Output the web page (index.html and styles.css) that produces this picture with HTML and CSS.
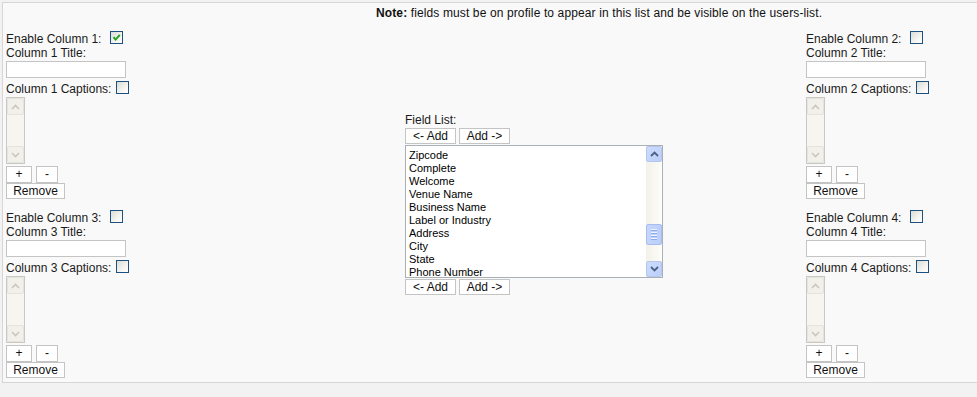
FILE: index.html
```html
<!DOCTYPE html>
<html lang="en">
<head>
    <meta charset="UTF-8">
    <title>Users List Columns</title>
    <link rel="stylesheet" href="styles.css">
</head>
<body>
    <div class="panel">
        <div class="note"><b>Note:</b> fields must be on profile to appear in this list and be visible on the users-list.</div>
        <div class="layout">
            <div class="side">
                <div class="column-block">
                    <div class="row enable">Enable Column 1:<span class="cb checked"><svg width="11" height="11" viewBox="0 0 11 11"><path d="M2.5 5.2 L4.6 7.6 L8.8 2.8" fill="none" stroke="#22a322" stroke-width="2"/></svg></span></div>
                    <div class="row">Column 1 Title:</div>
                    <input type="text" class="title-input">
                    <div class="row captions">Column 1 Captions:<span class="cb"></span></div>
                    <div class="caption-box">
                        <div class="dis-btn"><svg width="9" height="6" viewBox="0 0 9 6"><path d="M1 5 L4.5 1.5 L8 5" fill="none" stroke="#cac7bb" stroke-width="1.6"/></svg></div>
                        <div class="dis-track"></div>
                        <div class="dis-btn"><svg width="9" height="6" viewBox="0 0 9 6"><path d="M1 1 L4.5 4.5 L8 1" fill="none" stroke="#cac7bb" stroke-width="1.6"/></svg></div>
                    </div>
                    <div class="btn-row">
                        <button class="btn plus">+</button>
                        <button class="btn minus">-</button>
                    </div>
                    <button class="btn remove">Remove</button>
                </div>
                <div class="column-block">
                    <div class="row enable">Enable Column 3:<span class="cb"></span></div>
                    <div class="row">Column 3 Title:</div>
                    <input type="text" class="title-input">
                    <div class="row captions">Column 3 Captions:<span class="cb"></span></div>
                    <div class="caption-box">
                        <div class="dis-btn"><svg width="9" height="6" viewBox="0 0 9 6"><path d="M1 5 L4.5 1.5 L8 5" fill="none" stroke="#cac7bb" stroke-width="1.6"/></svg></div>
                        <div class="dis-track"></div>
                        <div class="dis-btn"><svg width="9" height="6" viewBox="0 0 9 6"><path d="M1 1 L4.5 4.5 L8 1" fill="none" stroke="#cac7bb" stroke-width="1.6"/></svg></div>
                    </div>
                    <div class="btn-row">
                        <button class="btn plus">+</button>
                        <button class="btn minus">-</button>
                    </div>
                    <button class="btn remove">Remove</button>
                </div>
            </div>

            <div class="center">
                <div class="row">Field List:</div>
                <div class="btn-row add-row">
                    <button class="btn add">&lt;- Add</button>
                    <button class="btn add">Add -&gt;</button>
                </div>
                <div class="field-list">
                    <ul class="items">
                        <li>Zipcode</li>
                        <li>Complete</li>
                        <li>Welcome</li>
                        <li>Venue Name</li>
                        <li>Business Name</li>
                        <li>Label or Industry</li>
                        <li>Address</li>
                        <li>City</li>
                        <li>State</li>
                        <li>Phone Number</li>
                    </ul>
                    <div class="scrollbar">
                        <div class="sb-btn"><svg width="9" height="6" viewBox="0 0 9 6"><path d="M1 5 L4.5 1.5 L8 5" fill="none" stroke="#4d6185" stroke-width="1.8"/></svg></div>
                        <div class="sb-track">
                            <div class="sb-thumb" style="margin-top: 62px;">
                                <span></span><span></span><span></span><span></span>
                            </div>
                        </div>
                        <div class="sb-btn"><svg width="9" height="6" viewBox="0 0 9 6"><path d="M1 1 L4.5 4.5 L8 1" fill="none" stroke="#4d6185" stroke-width="1.8"/></svg></div>
                    </div>
                </div>
                <div class="btn-row add-row">
                    <button class="btn add">&lt;- Add</button>
                    <button class="btn add">Add -&gt;</button>
                </div>
            </div>

            <div class="side">
                <div class="column-block">
                    <div class="row enable">Enable Column 2:<span class="cb"></span></div>
                    <div class="row">Column 2 Title:</div>
                    <input type="text" class="title-input">
                    <div class="row captions">Column 2 Captions:<span class="cb"></span></div>
                    <div class="caption-box">
                        <div class="dis-btn"><svg width="9" height="6" viewBox="0 0 9 6"><path d="M1 5 L4.5 1.5 L8 5" fill="none" stroke="#cac7bb" stroke-width="1.6"/></svg></div>
                        <div class="dis-track"></div>
                        <div class="dis-btn"><svg width="9" height="6" viewBox="0 0 9 6"><path d="M1 1 L4.5 4.5 L8 1" fill="none" stroke="#cac7bb" stroke-width="1.6"/></svg></div>
                    </div>
                    <div class="btn-row">
                        <button class="btn plus">+</button>
                        <button class="btn minus">-</button>
                    </div>
                    <button class="btn remove">Remove</button>
                </div>
                <div class="column-block">
                    <div class="row enable">Enable Column 4:<span class="cb"></span></div>
                    <div class="row">Column 4 Title:</div>
                    <input type="text" class="title-input">
                    <div class="row captions">Column 4 Captions:<span class="cb"></span></div>
                    <div class="caption-box">
                        <div class="dis-btn"><svg width="9" height="6" viewBox="0 0 9 6"><path d="M1 5 L4.5 1.5 L8 5" fill="none" stroke="#cac7bb" stroke-width="1.6"/></svg></div>
                        <div class="dis-track"></div>
                        <div class="dis-btn"><svg width="9" height="6" viewBox="0 0 9 6"><path d="M1 1 L4.5 4.5 L8 1" fill="none" stroke="#cac7bb" stroke-width="1.6"/></svg></div>
                    </div>
                    <div class="btn-row">
                        <button class="btn plus">+</button>
                        <button class="btn minus">-</button>
                    </div>
                    <button class="btn remove">Remove</button>
                </div>
            </div>
        </div>
    </div>
</body>
</html>
```

FILE: styles.css
```css
body {
    font-family: "Liberation Sans", Arial, sans-serif;
    font-size: 12px;
    color: #1a1a1a;
    background-color: #f2f2f2;
    margin: 0;
    padding: 0;
}
.panel {
    margin: 2px 0 0 2px;
    padding: 3px 0 4px 3px;
    background-color: #f9f9f9;
    border-top: 1px solid #d6d6d6;
    border-left: 1px solid #d6d6d6;
    border-bottom: 1px solid #d6d6d6;
}
.note {
    line-height: 14px;
    padding-left: 370px;
    letter-spacing: 0.12px;
    color: #111;
}
.layout {
    display: grid;
    grid-template-columns: 399px 401px 1fr;
    margin-top: 12px;
}
.side {
    display: flex;
    flex-direction: column;
    gap: 12px;
}
.column-block {
    display: flex;
    flex-direction: column;
    align-items: flex-start;
}
.row {
    display: flex;
    align-items: flex-start;
    line-height: 14px;
    height: 14px;
    white-space: nowrap;
}
/* XP style checkbox */
.cb {
    display: inline-flex;
    align-items: center;
    justify-content: center;
    width: 13px;
    height: 13px;
    box-sizing: border-box;
    margin-top: -1px;
    border: 1px solid #1c5180;
    background: linear-gradient(135deg, #dcdcd6 0%, #f4f4f0 60%, #ffffff 100%);
}
.enable .cb {
    margin-left: 9px;
}
.captions .cb {
    margin-left: 5px;
}
.captions {
    margin-top: 4px;
}
.title-input {
    width: 120px;
    height: 17px;
    box-sizing: border-box;
    margin: 1px 0 0 0;
    padding: 0;
    border: 1px solid #c4c4c4;
    background-color: #fff;
}
/* empty caption select with a disabled scrollbar */
.caption-box {
    width: 19px;
    height: 67px;
    box-sizing: border-box;
    margin-top: 1px;
    border: 1px solid #c8c8c4;
    display: flex;
    flex-direction: column;
    background-color: #f4f3ee;
}
.dis-btn {
    height: 17px;
    box-sizing: border-box;
    border: 1px solid #e6e4da;
    border-radius: 2px;
    background-color: #f1f0ea;
    display: flex;
    align-items: center;
    justify-content: center;
}
.dis-track {
    flex: 1;
    background-color: #f6f5f0;
}
.btn-row {
    display: flex;
    gap: 4px;
    margin-top: 2px;
}
.btn {
    font-family: "Liberation Sans", Arial, sans-serif;
    font-size: 12px;
    color: #111;
    background-color: #fff;
    border: 1px solid #c4c4c4;
    padding: 0;
    height: 17px;
    line-height: 15px;
    white-space: nowrap;
    cursor: pointer;
}
.plus {
    width: 26px;
}
.minus {
    width: 22px;
}
.remove {
    width: 59px;
    height: 16px;
    line-height: 14px;
}
.center {
    align-self: center;
    display: flex;
    flex-direction: column;
    align-items: flex-start;
    margin-top: -2px;
}
.add-row {
    gap: 3px;
    margin-top: 1px;
}
.add-row .add {
    width: 51px;
    height: 16px;
    line-height: 14px;
}
.field-list {
    width: 258px;
    height: 133px;
    box-sizing: border-box;
    margin-top: 1px;
    border: 1px solid #a9b0b6;
    background-color: #fff;
    display: flex;
}
.items {
    flex: 1;
    list-style-type: none;
    margin: 0;
    padding: 3px 0 0 3px;
    overflow: hidden;
    font-size: 11px;
    line-height: 13px;
    color: #000;
}
.scrollbar {
    width: 16px;
    display: flex;
    flex-direction: column;
    background-color: #f5f4ee;
}
.sb-btn {
    height: 16px;
    box-sizing: border-box;
    border: 1px solid #b4c6ee;
    border-radius: 2px;
    background: linear-gradient(135deg, #cddcfd 0%, #bccffb 100%);
    display: flex;
    align-items: center;
    justify-content: center;
}
.sb-track {
    flex: 1;
    background: linear-gradient(90deg, #f3f1e8 0%, #fdfdfa 100%);
}
.sb-thumb {
    height: 21px;
    box-sizing: border-box;
    border: 1px solid #a8bdee;
    border-radius: 2px;
    background: linear-gradient(90deg, #c5d6fc 0%, #bbcffb 100%);
    display: flex;
    flex-direction: column;
    align-items: center;
    justify-content: center;
    gap: 1px;
}
.sb-thumb span {
    display: block;
    width: 6px;
    height: 1px;
    background-color: #eef3fe;
    border-bottom: 1px solid #8eaaee;
}
```
